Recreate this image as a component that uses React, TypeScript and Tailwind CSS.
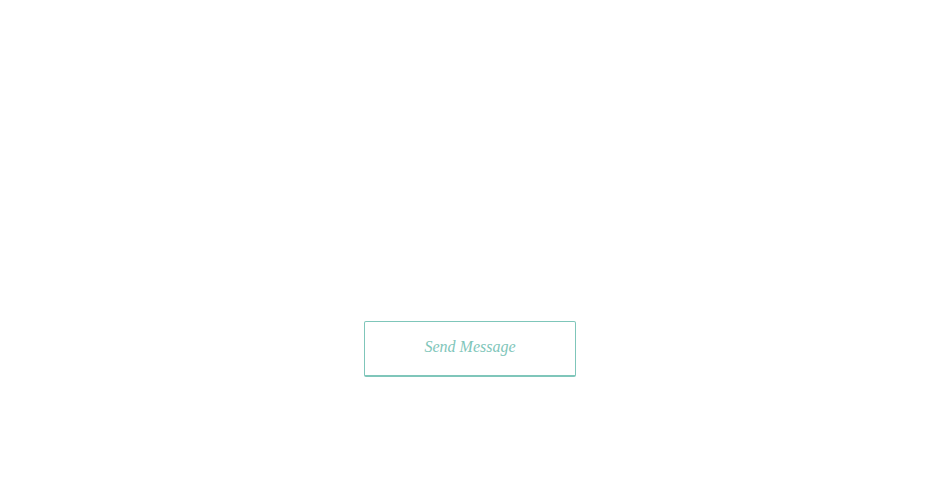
import React from 'react';

const App: React.FC = () => {
  return (
    <div className="w-full min-h-[502px] bg-white" style={{ fontFamily: '"Liberation Serif", serif' }}>
      <form className="flex flex-col items-center pt-[321px]" onSubmit={(e) => e.preventDefault()}>
        <button
          type="submit"
          className="w-[212px] h-[56px] pb-[3px] border border-b-2 border-[#7fc6ba] rounded-[2px] bg-white text-[#7fc6ba] italic text-[16px] leading-none"
        >
          Send Message
        </button>
      </form>
    </div>
  );
};

export default App;
